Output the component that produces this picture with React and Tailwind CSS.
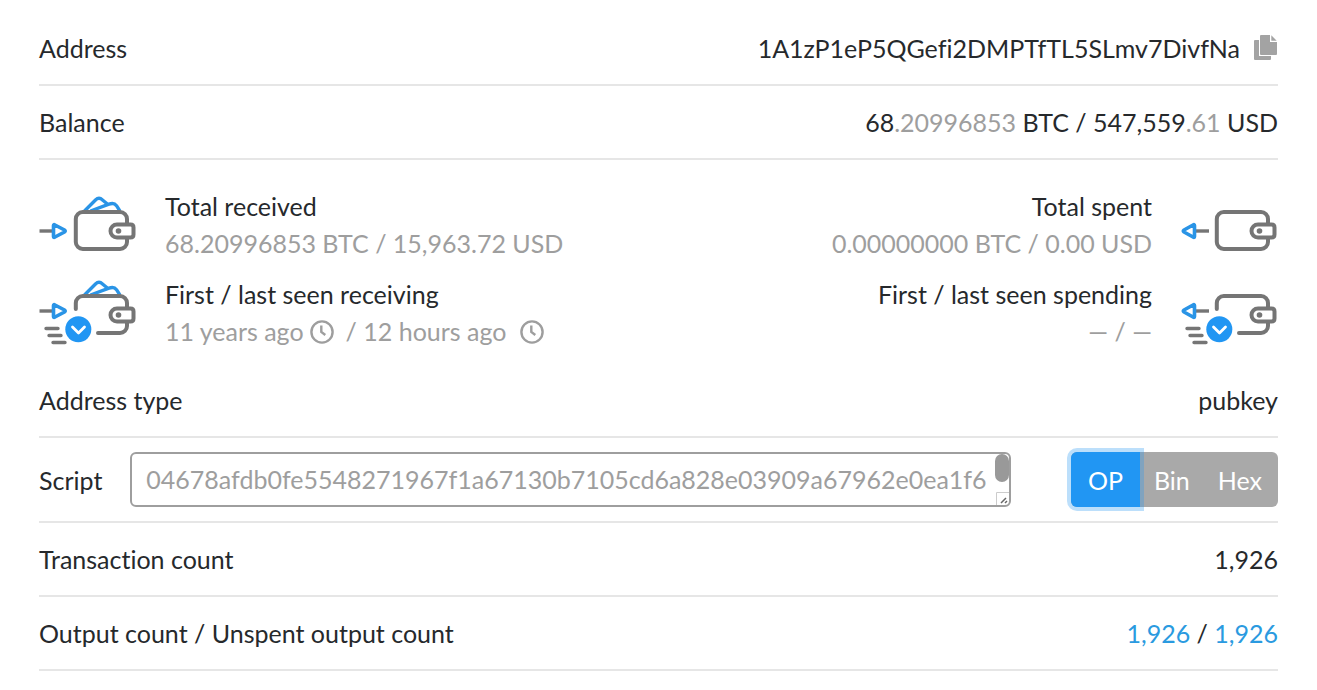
import React, { useState } from 'react';
import clsx from 'clsx';

const SCRIPT_TEXT = '04678afdb0fe5548271967f1a67130b7105cd6a828e03909a67962e0ea1f6';

const CopyIcon = () => (
  <svg className="w-6 h-[26px]" viewBox="0 0 24 26" fill="#a3a3a3" aria-hidden="true">
    <path d="M1 5h4v16h12v3a1 1 0 0 1-1 1H1a1 1 0 0 1-1-1V6a1 1 0 0 1 1-1z" />
    <path d="M7 0h9v7h7v12a1 1 0 0 1-1 1H7a1 1 0 0 1-1-1V1a1 1 0 0 1 1-1z" />
    <path d="M17.300 0.300l5.400 5.400h-5.400z" />
  </svg>
);

const ClockIcon = () => (
  <svg className="w-6 h-6" viewBox="0 0 24 24" fill="none" stroke="#9e9e9e" strokeWidth="2.4" aria-hidden="true">
    <circle cx="12" cy="12" r="10.600" />
    <path d="M11.300 5.500v6.500l4 3" />
  </svg>
);

const WalletIcon = ({ incoming, timed }) => (
  <svg
    className="w-[98px] h-[74px] shrink-0"
    viewBox="0 -1 98 74"
    fill="none"
    strokeWidth="4"
    strokeLinecap="round"
    strokeLinejoin="round"
    aria-hidden="true"
  >
    <g transform={timed ? 'translate(0 -4)' : undefined}>
      {incoming && (
        <g stroke="#2a94e6" strokeWidth="3.4" strokeLinecap="butt">
          <path d="M45.500 22L56.500 11q3.500-3.500 7 0l5.500 4.500" />
          <path d="M51.500 22L70 15.200q5-2 7.500 1.500l3.500 5.500" />
        </g>
      )}
      {timed ? (
        <path stroke="#757575" d="M36.800 36V30a7 7 0 0 1 7-7H81a7 7 0 0 1 7 7v5M88 49v4a7 7 0 0 1-7 7H59" />
      ) : (
        <path stroke="#757575" d="M88 35v-5a7 7 0 0 0-7-7H43.800a7 7 0 0 0-7 7v23a7 7 0 0 0 7 7H81a7 7 0 0 0 7-7v-4" />
      )}
      <path stroke="#757575" d="M78 35.500h13.500q3 0 3 3v7q0 3-3 3H78a6.500 6.500 0 0 1 0-13z" />
      <circle cx="79.500" cy="42" r="2.800" fill="#757575" />
    </g>
    <g transform={timed ? 'translate(0 -8)' : undefined}>
      {incoming ? (
        <>
          <path stroke="#757575" strokeWidth="3.400" strokeLinecap="butt" d="M0.500 42H13" />
          <path stroke="#2a94e6" strokeWidth="3.600" d="M14.500 36.500q0-1.500 1.500-0.500l9.500 5q1.500 1 0 2l-9.500 5q-1.500 1-1.500-0.500z" />
        </>
      ) : (
        <>
          <path stroke="#757575" strokeWidth="3.400" strokeLinecap="butt" d="M16 42H29" />
          <path stroke="#2a94e6" strokeWidth="3.600" d="M14.500 36.500q0-1.500-1.500-0.500l-9 5q-1.500 1 0 2l9 5q1.500 1 1.500-0.500z" />
        </>
      )}
    </g>
    {timed && (
      <>
        <path stroke="#757575" strokeWidth="3.400" d="M7 51.500H19M10 58.500H22M14 65.500H26" />
        <circle cx="39.300" cy="52.300" r="13" fill="#2196f3" />
        <path stroke="#fff" strokeWidth="2.800" d="M33.500 50l6 6 6-6" />
      </>
    )}
  </svg>
);

const Row = ({ label, children }) => (
  <div className="flex items-center justify-between py-[18px] border-b-2 border-[#e6e6e6]">
    <span>{label}</span>
    {children}
  </div>
);

const Stat = ({ label, right, timed, children }) => (
  <div className={clsx('flex gap-7', right && 'flex-row-reverse text-right')}>
    <WalletIcon incoming={!right} timed={timed} />
    <div>
      <div>{label}</div>
      <div className="flex items-center text-[#9e9e9e]">
        {right ? <span className="ml-auto">{children}</span> : children}
      </div>
    </div>
  </div>
);

const App = () => {
  const [format, setFormat] = useState('OP');

  return (
    <main className="bg-white pt-3 pb-5 px-[39px] font-['Lato',sans-serif] text-[25px] leading-9 text-[#26292c] [font-variant-ligatures:none]">
      <Row label="Address">
        <span className="flex items-center gap-[14px]">
          1A1zP1eP5QGefi2DMPTfTL5SLmv7DivfNa
          <button type="button" aria-label="Copy address">
            <CopyIcon />
          </button>
        </span>
      </Row>
      <Row label="Balance">
        <span>
          68<span className="text-[#9e9e9e]">.20996853</span> BTC / 547,559
          <span className="text-[#9e9e9e]">.61</span> USD
        </span>
      </Row>

      <div className="flex flex-col gap-[14px] pt-7 pb-[14px] leading-[37px]">
        <div className="flex justify-between">
          <Stat label="Total received">68.20996853 BTC / 15,963.72 USD</Stat>
          <Stat label="Total spent" right>
            0.00000000 BTC / 0.00 USD
          </Stat>
        </div>
        <div className="flex justify-between">
          <Stat label="First / last seen receiving" timed>
            <span className="mr-1.5">11 years ago</span>
            <ClockIcon />
            <span className="ml-3 mr-3.5">/ 12 hours ago</span>
            <ClockIcon />
          </Stat>
          <Stat label="First / last seen spending" right timed>
            — / —
          </Stat>
        </div>
      </div>

      <Row label="Address type">
        <span>pubkey</span>
      </Row>

      <div className="flex items-center py-[14px] border-b-2 border-[#e6e6e6]">
        <label htmlFor="script">Script</label>
        <div className="relative flex flex-1 ml-7 mr-[60px]">
          <textarea
            id="script"
            rows={1}
            readOnly
            value={SCRIPT_TEXT}
            className="w-full h-[55px] resize-none overflow-hidden whitespace-nowrap rounded-md border-2 border-[#9e9e9e] py-[7px] px-[14px] text-[#9e9e9e] outline-none"
          />
          <span className="absolute right-0.5 top-0.5 w-[14px] h-7 rounded-full bg-[#999]" />
          <svg className="absolute right-0.5 bottom-0.5 w-[13px] h-[13px]" viewBox="0 0 13 13" fill="none" aria-hidden="true">
            <path stroke="#ccc" d="M0.500 13V0.500H13" />
            <path stroke="#666" strokeWidth="1.500" d="M5 11l5-5M9 11l2-2" />
          </svg>
        </div>
        <div className="flex h-[55px] rounded-md bg-[#a9a9a9] text-white">
          {['OP', 'Bin', 'Hex'].map((name) => (
            <button
              key={name}
              type="button"
              onClick={() => setFormat(name)}
              className={clsx(
                'first:rounded-l-md last:rounded-r-md last:pr-4',
                format === name
                  ? 'relative px-[17px] bg-[#2196f3] shadow-[0_0_0_4px_rgba(33,150,243,0.3)]'
                  : 'px-[14px]'
              )}
            >
              {name}
            </button>
          ))}
        </div>
      </div>

      <Row label="Transaction count">
        <span>1,926</span>
      </Row>
      <Row label="Output count / Unspent output count">
        <span>
          <a href="#outputs" className="text-[#2a9ae0]">1,926</a>
          {' / '}
          <a href="#unspent" className="text-[#2a9ae0]">1,926</a>
        </span>
      </Row>
    </main>
  );
};

export default App;
